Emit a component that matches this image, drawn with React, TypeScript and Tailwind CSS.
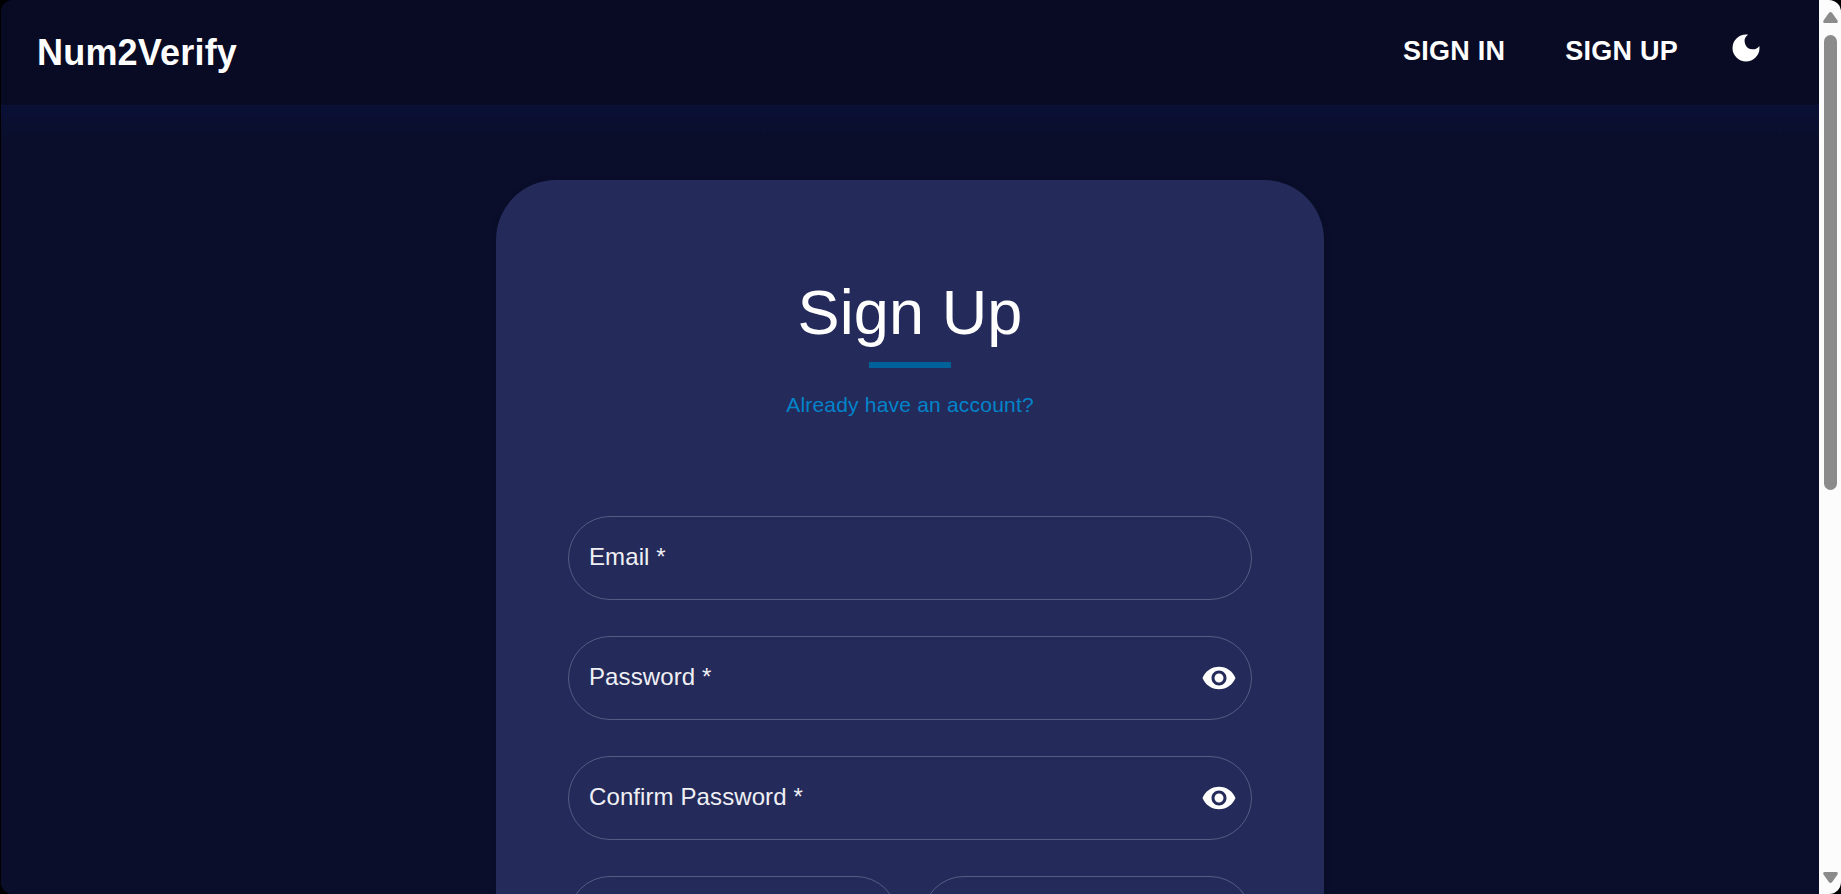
import { MdVisibility } from "react-icons/md";

function Field({ label, eye = false }: { label?: string; eye?: boolean }) {
  return (
    <div className="flex h-[84px] min-w-0 flex-1 items-center justify-between rounded-full border border-[#565b81] pr-[14px] pl-5">
      <label className="pb-0.5 text-2xl leading-9 tracking-[0.1px] text-[#f0f0f4]">{label}</label>
      {eye && <MdVisibility className="size-9 text-white" />}
    </div>
  );
}

function Header() {
  return (
    <header className="flex h-[105px] shrink-0 items-center justify-between bg-[#090a24] pr-[55px] pl-9 font-bold text-white shadow-[0_6px_24px_rgba(10,20,80,0.45)]">
      <span className="text-4xl tracking-[0.2px]">Num2Verify</span>
      <nav className="flex items-center text-[27px] tracking-[0.25px]">
        <a className="mr-[60px] pb-0.5">SIGN IN</a>
        <a className="mr-[50px] pb-0.5">SIGN UP</a>
        <svg viewBox="0 0 24 24" className="mb-2.5 size-9 fill-white">
          <path d="M12 3a9 9 0 1 0 9 9c0-.46-.04-.92-.1-1.36a5.389 5.389 0 0 1-4.4 2.26 5.403 5.403 0 0 1-3.14-9.8c-.44-.06-.9-.1-1.36-.1z" />
        </svg>
      </nav>
    </header>
  );
}

function Arrow() {
  return (
    <svg viewBox="0 0 15 11" className="h-[11px] w-[15px] fill-[#8b8b8b]">
      <path d="M6 .8Q7.5-.6 9 .8L14.5 8.4Q15.4 11 13.4 11H1.6Q-.4 11 .5 8.4Z" />
    </svg>
  );
}

function Scrollbar() {
  return (
    <div className="flex w-[22px] shrink-0 flex-col items-center bg-[#fcfcfc] pt-3 pb-[11px]">
      <Arrow />
      <div className="mt-3 h-[455px] w-[13px] rounded-full bg-[#8b8b8b]" />
      <div className="mt-auto rotate-180">
        <Arrow />
      </div>
    </div>
  );
}

export default function App() {
  return (
    <div className="h-[894px] w-[1841px] bg-black pl-px font-['Liberation_Sans',Arial,sans-serif]">
      <div className="flex h-full overflow-hidden rounded-[12px] bg-[#0a0e2b]">
        <div className="flex min-w-0 flex-1 flex-col">
          <Header />
          <main className="flex min-h-0 flex-1 justify-center overflow-hidden bg-[linear-gradient(to_bottom,#0a1036_0px,#0a0e2b_36px)] pt-[75px]">
            <section className="flex h-[1200px] w-[828px] flex-col items-center rounded-[60px] bg-[#242b5a] px-[72px] pt-[95px] shadow-[0_1px_6px_rgba(0,0,0,0.15)]">
              <h1 className="text-[63px] leading-[74px] tracking-[0.1px] text-white">Sign Up</h1>
              <div className="mt-[13px] h-[6px] w-[82px] bg-[#006298]" />
              <a className="mt-[21px] text-[21px] leading-8 tracking-[0.2px] text-[#0284cb]">Already have an account?</a>
              <form className="mt-[95px] flex w-full flex-col gap-9">
                <div className="flex"><Field label="Email *" /></div>
                <div className="flex"><Field label="Password *" eye /></div>
                <div className="flex"><Field label="Confirm Password *" eye /></div>
                <div className="flex gap-6"><Field /><Field /></div>
              </form>
            </section>
          </main>
        </div>
        <Scrollbar />
      </div>
    </div>
  );
}
